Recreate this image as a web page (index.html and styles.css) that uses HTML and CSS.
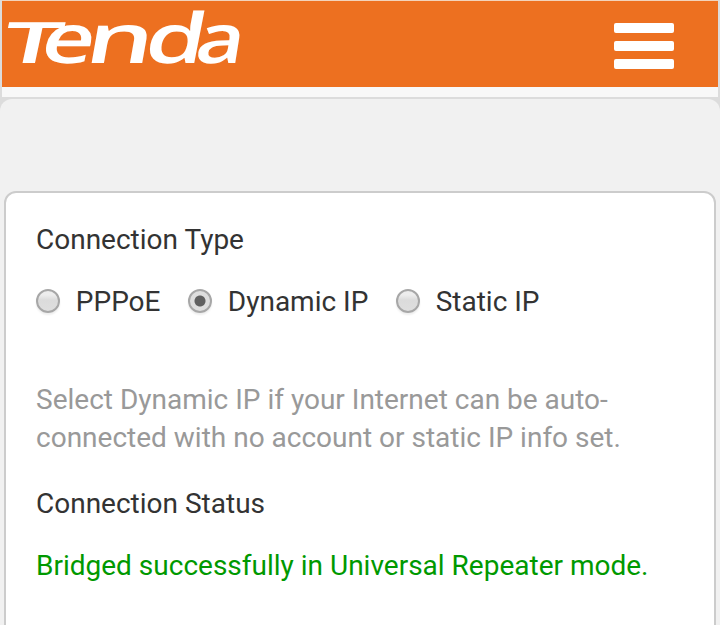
FILE: index.html
```html
<!DOCTYPE html>
<html lang="en">
<head>
    <meta charset="UTF-8">
    <meta name="viewport" content="width=device-width, initial-scale=1.0">
    <title>Tenda</title>
    <link rel="stylesheet" href="styles.css">
</head>
<body>
    <header class="header">
        <svg class="logo" width="260" height="86" viewBox="0 0 260 86">
            <text class="logo-text logo-cap" transform="translate(-1 62) skewX(-12) scale(1.85 1)">T</text>
            <text class="logo-text" transform="translate(38 62) skewX(-12) scale(1.33 1)">e</text>
            <text class="logo-text" transform="translate(83 62) skewX(-10) scale(1.54 1)">n</text>
            <text class="logo-text" transform="translate(142 62) skewX(-11) scale(1.4 1)">d</text>
            <text class="logo-text" transform="translate(193 62) skewX(-9) scale(1.22 1)">a</text>
        </svg>
        <button class="menu-button" type="button" aria-label="Menu">
            <span class="menu-bar"></span>
            <span class="menu-bar"></span>
            <span class="menu-bar"></span>
        </button>
    </header>

    <main class="main">
        <form class="panel">
            <h2 class="label">Connection Type</h2>
            <div class="radio-group">
                <label class="radio"><input type="radio" name="wanType" value="pppoe">PPPoE</label>
                <label class="radio"><input type="radio" name="wanType" value="dhcp" checked>Dynamic IP</label>
                <label class="radio"><input type="radio" name="wanType" value="static">Static IP</label>
            </div>
            <p class="help-text">Select Dynamic IP if your Internet can be auto-connected with no account or static IP info set.</p>
            <h2 class="label">Connection Status</h2>
            <p class="status">Bridged successfully in Universal Repeater mode.</p>
        </form>
    </main>
</body>
</html>
```
FILE: styles.css
```css
* {
    margin: 0;
    padding: 0;
    box-sizing: border-box;
}

body {
    height: 625px;
    overflow: hidden;
    background: #dcdcdc;
    color: #333;
    font-family: Roboto, sans-serif;
    font-size: 28px;
    line-height: 38px;
}

.header {
    display: flex;
    justify-content: space-between;
    height: 97px;
    margin: 0 2px;
    padding: 0 44px 0 0;
    background: #ed7020;
    border-top: 1px solid #f3d3bb;
    border-bottom: 10px solid #f8f8f8;
}

.logo {
    margin-left: -2px;
    overflow: visible;
}

.logo-text {
    fill: #fff;
    font-family: "Open Sans", sans-serif;
    font-size: 69px;
    font-weight: 600;
}

.logo-cap {
    font-size: 57px;
}

.menu-button {
    display: flex;
    flex-direction: column;
    gap: 8px;
    width: 60px;
    margin-top: 22px;
    border: none;
    background: none;
    cursor: pointer;
}

.menu-bar {
    width: 60px;
    height: 10px;
    border-radius: 2px;
    background: #fff;
}

.main {
    height: 526px;
    margin-top: 2px;
    padding: 92px 4px 0;
    border-radius: 12px 12px 0 0;
    background: #f1f1f1;
}

.panel {
    height: 460px;
    padding: 28px 30px;
    border: 2px solid #ccc;
    border-radius: 12px;
    background: #fff;
}

.label {
    font-size: 28px;
    font-weight: 400;
}

.radio-group {
    display: flex;
    gap: 27.5px;
    margin: 24px 0 60px;
}

.radio {
    display: flex;
    align-items: center;
    gap: 15.8px;
}

.radio input {
    appearance: none;
    width: 24px;
    height: 24px;
    margin-bottom: 2px;
    border: 2px solid #a7a7a7;
    border-radius: 50%;
    background: linear-gradient(#ededed 20%, #dbdbdb 45%, #dedede);
    box-shadow: 0 2px 2px #eee;
}

.radio input:checked {
    background: radial-gradient(circle, #606060 5px, #dedede 6px);
}

.help-text {
    margin-bottom: 28px;
    color: #999;
}

.status {
    margin-top: 24px;
    color: #090;
}
```
